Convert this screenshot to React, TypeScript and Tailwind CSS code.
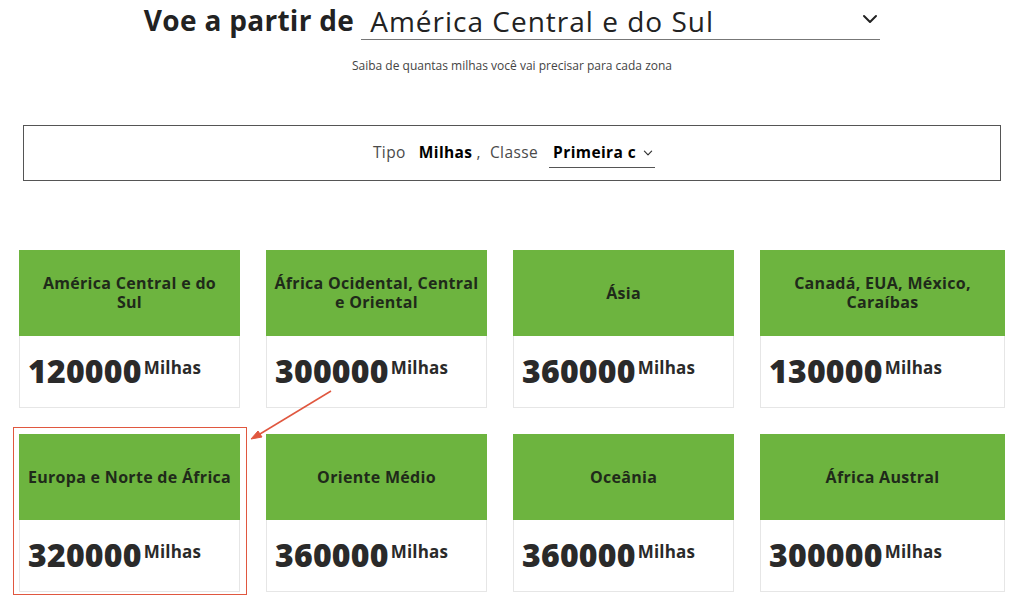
const zones = [
  { name: "América Central e do\nSul", miles: "120000" },
  { name: "África Ocidental, Central\ne Oriental", miles: "300000" },
  { name: "Ásia", miles: "360000" },
  { name: "Canadá, EUA, México,\nCaraíbas", miles: "130000" },
  { name: "Europa e Norte de África", miles: "320000" },
  { name: "Oriente Médio", miles: "360000" },
  { name: "Oceânia", miles: "360000" },
  { name: "África Austral", miles: "300000" },
];

function Chevron({ className }: { className?: string }) {
  return (
    <svg viewBox="0 0 16 10" fill="none" stroke="currentColor" strokeWidth="2" strokeLinecap="round" strokeLinejoin="round" className={className}>
      <path d="M2 2l6 6 6-6" />
    </svg>
  );
}

function ZoneCard({ name, miles }: { name: string; miles: string }) {
  return (
    <div className="flex flex-col">
      <div className="h-[86px] bg-[#6db43f] flex items-center justify-center px-[6px] text-center whitespace-pre-line text-[16px] leading-[19px] font-bold tracking-[0.3px] text-[#1f2a1a]">
        {name}
      </div>
      <div className="h-[72px] bg-white border border-t-0 border-[#e6e6e6] pl-[8px] pt-[19px] flex items-start">
        <span className="text-[32px] leading-[32px] font-extrabold text-[#2a2a2a] tracking-[0.2px]">{miles}</span>
        <span className="text-[17px] leading-[17px] font-bold text-[#2a2a2a] mt-[4px] ml-[2px] tracking-[0.2px]">Milhas</span>
      </div>
    </div>
  );
}

export default function App() {
  return (
    <main className="relative w-[1024px] h-[598px] overflow-hidden bg-white text-[#222] font-['Open_Sans',sans-serif]">
      <div className="flex justify-center items-end gap-[7px] pt-[3px]">
        <h1 className="text-[28px] leading-[34px] font-bold text-[#222] tracking-[0.3px] pb-[3px]">Voe a partir de</h1>
        <div className="w-[519px] h-[37px] border-b border-[#777] flex items-center justify-between pl-[9px] pr-[2px]">
          <span className="text-[28px] leading-[34px] text-[#222] tracking-[1px]">América Central e do Sul</span>
          <Chevron className="w-[16px] h-[10px] text-[#222] mb-[4px]" />
        </div>
      </div>

      <p className="mt-[18px] text-center text-[12px] leading-[16px] text-[#444]">
        Saiba de quantas milhas você vai precisar para cada zona
      </p>

      <div className="mx-[23px] mt-[51px] h-[56px] border-[1.5px] border-[#555] flex items-center justify-center pt-[3px]">
        <div className="flex items-baseline text-[15.5px] tracking-[0.4px] pl-[4px]">
          <span className="text-[#4a4a4a]">Tipo</span>
          <span className="ml-[13px] font-bold text-black">Milhas</span>
          <span className="ml-[4px] text-[#4a4a4a]">,</span>
          <span className="ml-[9px] text-[#4a4a4a]">Classe</span>
          <span className="ml-[11px] flex items-center gap-[7px] border-b border-[#555] pl-[4px] pr-[2px] pb-[3px] font-bold text-black">
            Primeira c
            <Chevron className="w-[10px] h-[6px] text-[#333]" />
          </span>
        </div>
      </div>

      <div className="mt-[69px] ml-[19px] grid grid-cols-[221px_221px_221px_245px] gap-x-[26px] gap-y-[26px]">
        {zones.map((z) => (
          <ZoneCard key={z.name} name={z.name} miles={z.miles} />
        ))}
      </div>

      <div className="absolute left-[13px] top-[427px] w-[234px] h-[168px] border-[1.5px] border-[#e0573f]" />
      <svg className="absolute left-0 top-0 pointer-events-none" width="1024" height="598">
        <line x1="331" y1="391" x2="255" y2="437" stroke="#e0573f" strokeWidth="1.5" />
        <path d="M251 439 L262 437 L258 431 Z" fill="#e0573f" stroke="#e0573f" strokeWidth="1" />
      </svg>
    </main>
  );
}
